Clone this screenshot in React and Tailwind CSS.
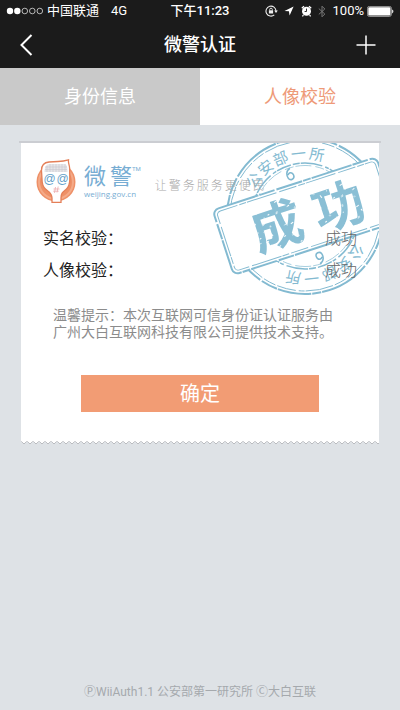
const RING = [
  ['公', -55],
  ['安', -39],
  ['部', -23],
  ['一', -6],
  ['所', 11],
];

function StatusBar() {
  return (
    <div className="grid h-[22px] grid-cols-[1fr_auto_1fr] items-center px-[6px] text-[13px] leading-5">
      <div className="flex items-center">
        <svg width="38" height="8" viewBox="0 0 38 8" aria-hidden="true">
          <circle cx="4" cy="4" r="3.2" fill="#fff" />
          <circle cx="11.3" cy="4" r="3.2" fill="#fff" />
          <g fill="none" stroke="#ddd" strokeWidth="0.8">
            <circle cx="18.8" cy="4" r="2.8" />
            <circle cx="26.3" cy="4" r="2.8" />
            <circle cx="33.8" cy="4" r="2.8" />
          </g>
        </svg>
        <span className="ml-[3px]">中国联通</span>
        <span className="ml-3">4G</span>
      </div>
      <span className="font-medium">下午11:23</span>
      <div className="flex items-center justify-end">
        <svg className="mr-[6px]" width="13" height="12" viewBox="0 0 13 12" fill="none" stroke="#eee" aria-hidden="true">
          <path d="M9.3 9.9A5 5 0 1 1 11 6" strokeWidth="1.1" />
          <path d="M9.2 5.6h3.6L11 8.1z" fill="#eee" stroke="none" />
          <rect x="3.9" y="5.3" width="4.2" height="3.2" fill="#eee" stroke="none" />
          <path d="M4.7 5.4V4.5a1.3 1.3 0 0 1 2.6 0v.9" strokeWidth="0.9" />
        </svg>
        <svg className="mr-[7px]" width="10" height="10" viewBox="0 0 10 10" fill="#fff" aria-hidden="true">
          <path d="M9.6.6 5.6 9.6 4.9 5.3.5 4.9z" />
        </svg>
        <svg className="mr-[6px]" width="11" height="12" viewBox="0 0 11 12" aria-hidden="true">
          <circle cx="5.5" cy="6.3" r="4.5" fill="#fff" />
          <path d="M.8 3.2 3 1.2M10.2 3.2 8 1.2M2.4 10.2l-1 1.2M8.6 10.2l1 1.2" stroke="#fff" strokeWidth="1.3" />
          <path d="M5.5 3.6v2.9H3.6" fill="none" stroke="#1b1b1b" strokeWidth="0.9" />
        </svg>
        <svg className="mr-[7px]" width="8" height="13" viewBox="0 0 8 13" fill="none" stroke="#777" aria-hidden="true">
          <path d="m.8 3.6 6 5.4L4 11.8V1.2L6.8 4l-6 5.4" />
        </svg>
        <span>100%</span>
        <svg className="ml-[3px]" width="27" height="11" viewBox="0 0 27 11" aria-hidden="true">
          <rect x=".4" y=".4" width="24" height="10" rx="2" fill="none" stroke="#bbb" strokeWidth=".8" />
          <rect x="1.3" y="1.3" width="22.2" height="8.2" rx="1.2" fill="#fff" />
          <path d="M25.2 3.6c1.6.5 1.6 3.2 0 3.8z" fill="#fff" />
        </svg>
      </div>
    </div>
  );
}

function Face() {
  return (
    <svg width="40" height="44" viewBox="0 0 40 44" aria-hidden="true">
      <circle cx="20" cy="23" r="19.5" fill="#ee9067" />
      <circle cx="20" cy="23" r="17" fill="none" stroke="#f4aa88" strokeWidth="2" />
      <path
        d="M16 43.5V39C16 34 13 33 9.5 30C6.5 27.5 6 24 6 20L5.5 12C5.3 7 8 3.5 13 3L22 2.5C26 2.3 29 1.8 32.5.8C32 4 33.5 6 33.6 9L33.8 20C33.8 25 33 28 30 30.5C27 33 25 34 25 39V43.5Z"
        fill="#fff"
        stroke="#e47f58"
        strokeWidth="1.3"
      />
      <path d="M8.5 13C8.5 8 10 5 14 5H28C31 5 31.5 8 31.5 13Z" fill="#e6e5e8" />
      <path d="M11 7v6M14 5v8M17 5v8M20 5v8M23 5v8M26 5v8M29 5v8M9 8h22M9 10.5h22" stroke="#cbc8ce" strokeWidth=".6" />
      <g fill="#649fc9" fontFamily="Liberation Sans, sans-serif" fontSize="12" textAnchor="middle">
        <text x="13.5" y="24">@</text>
        <text x="26.5" y="24">@</text>
      </g>
      <path d="m19.5 28-1 6M22.2 27.5l-1.2 6M17.5 30h6M17.2 32.2h5.5" stroke="#e9a0a4" strokeWidth=".7" />
    </svg>
  );
}

function RingText() {
  return (
    <>
      {RING.map(([char, angle]) => (
        <text key={char} transform={`rotate(${angle})`} y="-57" textAnchor="middle">
          {char}
        </text>
      ))}
      <path
        transform="rotate(-21)"
        d="M3-50c-5 1-6 6-5 9 1 3 6 3 6-1s-4-5-5-2"
        fill="none"
        stroke="#7fb8d0"
        strokeWidth="1.5"
      />
    </>
  );
}

function Stamp() {
  return (
    <svg
      className="pointer-events-none absolute top-0 right-0"
      width="168"
      height="156"
      viewBox="211 143 168 156"
      role="img"
      aria-label="成功"
    >
      <defs>
        <pattern id="wear" width="31" height="27" patternUnits="userSpaceOnUse" patternTransform="rotate(-20)">
          <rect width="31" height="27" fill="#8abfd5" />
          <path
            d="M2 3h2v1H2zM9 7l3-1v1l-2 1zM17 2h1v2h-1zM22 8h3v1h-2zM27 14l2-1v2zM5 13l1 2-2 1zM12 17h2v1h-2zM19 14l2 1-1 1zM8 22l3-1v1zM24 20h1v3h-1zM15 24h3v1h-3zM1 20h1v1H1zM14 11h1v1h-1zM28 3h1v1h-1z"
            fill="#fff"
          />
        </pattern>
      </defs>
      <g transform="translate(305 216)" fontFamily="Noto Sans CJK SC, sans-serif">
        <g fill="none" stroke="#83bad1">
          <circle r="78" strokeWidth="2" strokeDasharray="34 1 17 2 51 1 9 1" />
          <circle r="75" strokeWidth="1" strokeDasharray="13 2 28 1 6 3 19 2" />
          <circle r="53" strokeWidth="1.5" strokeDasharray="15 2 7 1 22 3 4 1" />
          <circle r="50.5" strokeWidth=".7" strokeDasharray="9 2 16 4" />
        </g>
        <rect transform="rotate(-18)" x="-86" y="-34" width="172" height="68" rx="6" fill="#fff" />
        <g fill="#83bad1" fontSize="15">
          <RingText />
          <g transform="rotate(180)">
            <RingText />
          </g>
        </g>
        <g transform="rotate(-18)">
          <g fill="none" stroke="#83bad1">
            <rect x="-86" y="-34" width="172" height="68" rx="6" strokeWidth="2" strokeDasharray="42 1 16 2 27 1 8 1" />
            <rect x="-83" y="-31" width="166" height="62" rx="4" strokeWidth="1" strokeDasharray="18 2 7 1 31 3" />
          </g>
          <g fill="url(#wear)" fontSize="52" fontWeight="700" textAnchor="middle">
            <text x="-30" y="20">成</text>
            <text x="35" y="20">功</text>
          </g>
        </g>
      </g>
    </svg>
  );
}

function Result({ label, value }) {
  return (
    <div className="flex h-8 items-center justify-between px-[22px] text-base">
      <dt className="text-[#222]">{label}：</dt>
      <dd className="relative z-10 font-light text-[#666]">{value}</dd>
    </div>
  );
}

export default function App() {
  return (
    <div className="flex min-h-screen flex-col bg-[#dee2e6] font-['Roboto','Noto_Sans_CJK_SC',sans-serif]">
      <header className="bg-[#1b1b1b] text-white">
        <StatusBar />
        <div className="grid h-[46px] grid-cols-[1fr_auto_1fr] items-center px-5">
          <button type="button" aria-label="返回" className="justify-self-start">
            <svg width="13" height="22" viewBox="0 0 13 22" fill="none" stroke="#fff" strokeWidth="2">
              <path d="M11.5 1 1.5 11l10 10" />
            </svg>
          </button>
          <h1 className="text-lg font-medium">微警认证</h1>
          <button type="button" aria-label="添加" className="justify-self-end py-1 pr-1">
            <svg width="20" height="20" viewBox="0 0 20 20" stroke="#fff" strokeWidth="1.5">
              <path d="M10 .5v19M.5 10h19" />
            </svg>
          </button>
        </div>
      </header>

      <nav className="grid h-[57px] grid-cols-2 text-lg">
        <button type="button" className="bg-[#c9c9c9] text-white">身份信息</button>
        <button type="button" className="bg-white text-[#ee9a78]">人像校验</button>
      </nav>

      <main className="mx-[19px] mt-4 border-t-2 border-[#cbcdd2] px-[2px]">
        <section className="relative overflow-hidden bg-white pb-7">
          <div className="flex h-[60px] items-end pl-[15px]">
            <Face />
            <div className="ml-2 text-[#77add3]">
              <div className="flex items-start text-[22px] leading-6">
                <span>微</span>
                <span className="ml-1">警</span>
                <span className="text-[6px] leading-2">TM</span>
              </div>
              <div className="pb-1 font-['Open_Sans'] text-[8px] leading-[10px]">weijing.gov.cn</div>
            </div>
            <p className="relative z-10 mb-[7px] ml-[14px] text-[12px] leading-5 font-light tracking-[2px] whitespace-nowrap text-[#aaa]">让警务服务更便民</p>
          </div>
          <Stamp />
          <dl className="mt-5">
            <Result label="实名校验" value="成功" />
            <Result label="人像校验" value="成功" />
          </dl>
          <p className="mt-5 pr-[42px] pl-8 text-sm leading-[17px] text-[#8c8c8c]">
            温馨提示：本次互联网可信身份证认证服务由广州大白互联网科技有限公司提供技术支持。
          </p>
          <button type="button" className="mx-auto mt-[34px] block h-[37px] w-2/3 bg-[#f29c74] text-xl text-white">
            确定
          </button>
        </section>
        <svg className="block w-full" height="4" aria-hidden="true">
          <defs>
            <pattern id="teeth" width="6" height="4" patternUnits="userSpaceOnUse">
              <path d="M0 1 3 4l3-3" fill="#fff" stroke="#b9bbbf" strokeWidth="1" />
              <path d="M0 0h6v1L3 3 0 1z" fill="#fff" />
            </pattern>
          </defs>
          <rect width="100%" height="4" fill="url(#teeth)" />
        </svg>
      </main>

      <footer className="mt-auto pb-2 text-center text-[12px] leading-5 text-[#a5a9ad]">
        ⓅWiiAuth1.1 公安部第一研究所 Ⓒ大白互联
      </footer>
    </div>
  );
}
